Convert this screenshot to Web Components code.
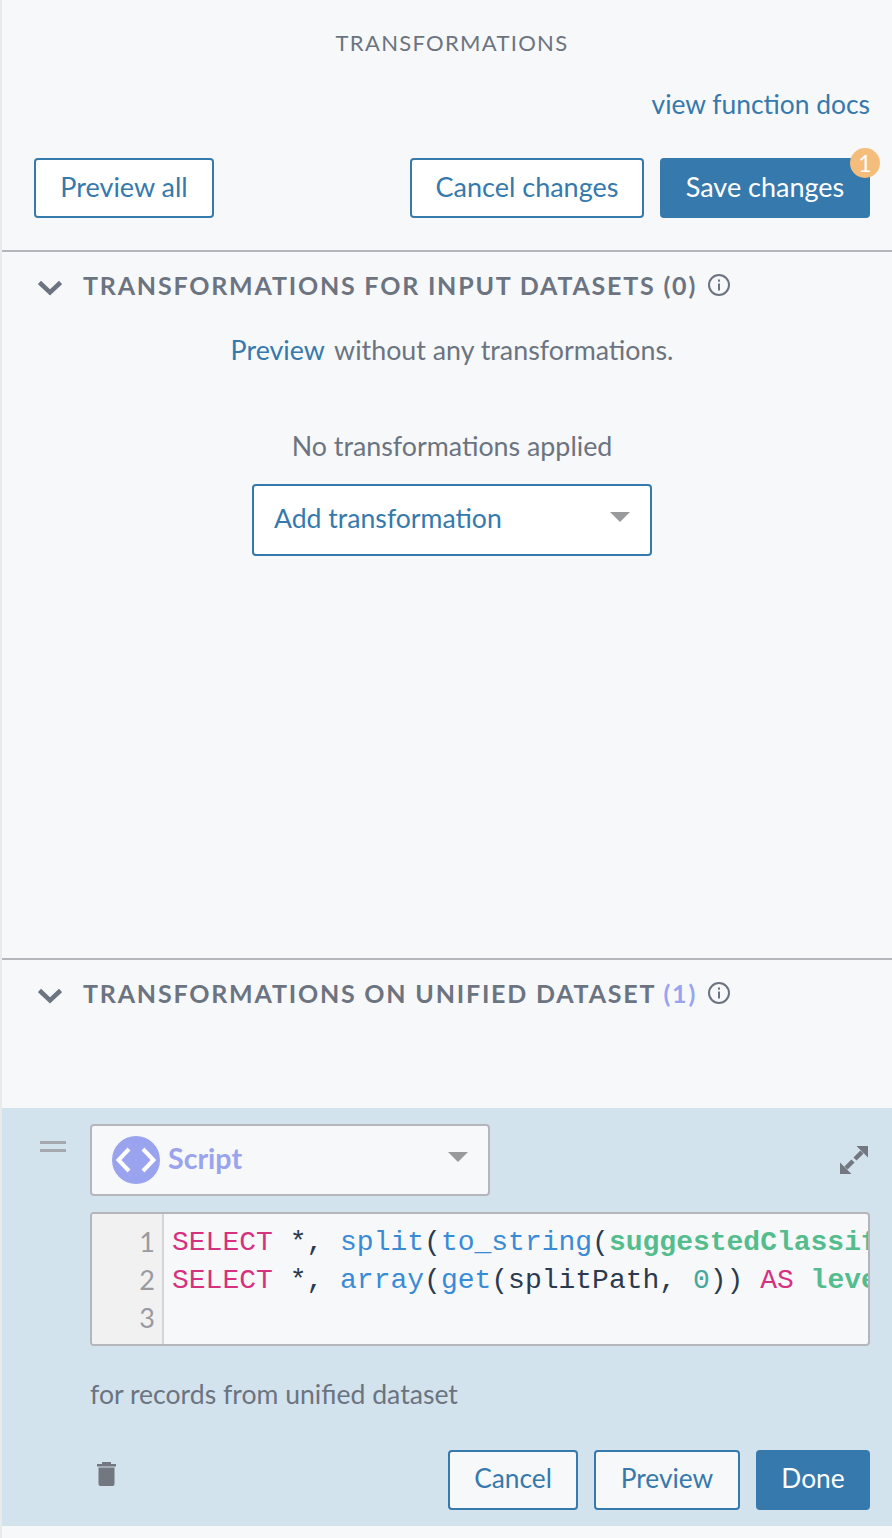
<!DOCTYPE html>
<html>
<head>
<meta charset="utf-8">
<title>Transformations</title>
<style>
    html, body { margin: 0; padding: 0; }
    body { font-family: "Lato", "Liberation Sans", sans-serif; color: #6b7480; background: #f7f8fa; }
</style>
</head>
<body>
<x-transforms-panel></x-transforms-panel>

<script>
class XButton extends HTMLElement {
    constructor() {
        super();
        this.attachShadow({ mode: 'open' });
        this.shadowRoot.innerHTML = `
            <style>
                :host {
                    display: inline-flex;
                    position: relative;
                    box-sizing: border-box;
                    height: 60px;
                    padding-bottom: 4px;
                    align-items: center;
                    justify-content: center;
                    border: 2px solid #3679ad;
                    border-radius: 4px;
                    background: var(--btn-bg, #fff);
                    color: #3679ad;
                    font-size: var(--btn-size, 27px);
                    white-space: nowrap;
                }
                :host([primary]) {
                    background: #3679ad;
                    color: #fff;
                }
            </style>
            <slot></slot>
        `;
    }
}
customElements.define('x-button', XButton);

class XBadge extends HTMLElement {
    constructor() {
        super();
        this.attachShadow({ mode: 'open' });
        this.shadowRoot.innerHTML = `
            <style>
                :host {
                    position: absolute;
                    top: -12px;
                    right: -12px;
                    width: 30px;
                    height: 30px;
                    border-radius: 50%;
                    background: #f5bd7c;
                    color: #fff;
                    font-size: 23px;
                    display: flex;
                    align-items: center;
                    justify-content: center;
                }
            </style>
            <slot></slot>
        `;
    }
}
customElements.define('x-badge', XBadge);

class XSelect extends HTMLElement {
    constructor() {
        super();
        this.attachShadow({ mode: 'open' });
        this.shadowRoot.innerHTML = `
            <style>
                :host {
                    display: flex;
                    box-sizing: border-box;
                    width: 400px;
                    height: 72px;
                    padding: 0 20px 4px;
                    align-items: center;
                    justify-content: space-between;
                    border: 2px solid #3679ad;
                    border-radius: 4px;
                    background: #fff;
                    color: #3679ad;
                    font-size: 26.6px;
                }
                :host([muted]) {
                    border-color: #b4b6bc;
                    background: #f7f8fa;
                    padding-bottom: 0;
                }
                .caret {
                    flex: none;
                    width: 0;
                    height: 0;
                    margin-bottom: 2px;
                    border-left: 10px solid transparent;
                    border-right: 10px solid transparent;
                    border-top: 10px solid #999a9c;
                }
                :host([muted]) .caret { margin-bottom: 6px; }
            </style>
            <slot></slot>
            <div class="caret"></div>
        `;
    }
}
customElements.define('x-select', XSelect);

class XSection extends HTMLElement {
    constructor() {
        super();
        this.attachShadow({ mode: 'open' });
        this.shadowRoot.innerHTML = `
            <style>
                :host {
                    display: block;
                    box-sizing: border-box;
                    border-top: 2px solid #b4b6bc;
                }
                .head {
                    display: flex;
                    align-items: center;
                    box-sizing: border-box;
                    height: 68px;
                    padding: 0 0 2px 36px;
                    color: #6b7480;
                    font-size: 25px;
                    font-weight: 700;
                    letter-spacing: 1.8px;
                    white-space: nowrap;
                }
                .chev { width: 24px; height: 16px; margin: 6px 21px 0 0; flex: none; }
                .info { width: 24px; height: 24px; margin-left: 10px; flex: none; }
            </style>
            <div class="head">
                <svg class="chev" viewBox="0 0 24 16"><path d="M1.5 2.5L12 12.5 22.5 2.5" fill="none" stroke="#6b7480" stroke-width="4.5"/></svg>
                <span><slot name="title"></slot></span>
                <svg class="info" viewBox="0 0 24 24">
                    <circle cx="12" cy="12" r="10" fill="none" stroke="#6b7480" stroke-width="2"/>
                    <rect x="11" y="10.5" width="2" height="7" fill="#6b7480"/>
                    <rect x="11" y="6.5" width="2" height="2.2" fill="#6b7480"/>
                </svg>
            </div>
            <slot></slot>
        `;
    }
}
customElements.define('x-section', XSection);

class XCodeEditor extends HTMLElement {
    constructor() {
        super();
        this.attachShadow({ mode: 'open' });
        this.shadowRoot.innerHTML = `
            <style>
                :host {
                    display: flex;
                    box-sizing: border-box;
                    height: 134px;
                    border: 2px solid #b4b6bc;
                    border-radius: 4px;
                    background: #f7f8fa;
                    overflow: hidden;
                    font-family: "Liberation Mono", monospace;
                    font-size: 28px;
                    line-height: 38px;
                }
                .gutter {
                    flex: none;
                    box-sizing: border-box;
                    width: 72px;
                    padding: 9px 7px 0 0;
                    background: #f1f1f2;
                    border-right: 2px solid #d4d5d8;
                    color: #999a9f;
                    font-family: "Lato", sans-serif;
                    font-size: 27px;
                    text-align: right;
                }
                .code {
                    flex: 1;
                    min-width: 0;
                    padding: 10px 0 0 8px;
                    color: #2b3a4e;
                    white-space: pre;
                    overflow: hidden;
                }
            </style>
            <div class="gutter">1<br>2<br>3</div>
            <div class="code"><slot></slot></div>
        `;
    }
}
customElements.define('x-code-editor', XCodeEditor);

class XTransformCard extends HTMLElement {
    constructor() {
        super();
        this.attachShadow({ mode: 'open' });
        this.shadowRoot.innerHTML = `
            <style>
                :host {
                    display: flex;
                    --btn-bg: #f7f8fa;
                    --btn-size: 26.3px;
                    background: #d3e3ee;
                    padding: 16px 22px 16px 36px;
                }
                .handle { flex: none; width: 52px; padding-top: 17px; box-sizing: border-box; }
                .handle svg { display: block; }
                .main { flex: 1; min-width: 0; }
                .row { display: flex; justify-content: space-between; align-items: center; }
                .expand { width: 28px; height: 28px; margin-right: 2px; }
                .script { display: flex; align-items: center; gap: 8px; margin-bottom: 4px; font-size: 28.6px; font-weight: 700; color: #9aa3ee; }
                .script svg { width: 48px; height: 48px; flex: none; margin-top: 4px; }
                x-code-editor { margin-top: 16px; }
                .caption {
                    margin-top: 33px;
                    height: 30px;
                    line-height: 30px;
                    font-size: 26.6px;
                    color: #6b7480;
                }
                .actions { display: flex; justify-content: space-between; margin-top: 41px; }
                .trash { width: 19px; height: 24px; margin: 12px 0 0 7px; }
                .btns { display: flex; gap: 16px; }
            </style>
            <div class="handle">
                <svg width="28" height="12" viewBox="0 0 28 12"><rect x="2" width="26" height="3" fill="#a5a8ad"/><rect x="2" y="8" width="26" height="3" fill="#a5a8ad"/></svg>
            </div>
            <div class="main">
                <div class="row">
                    <x-select muted>
                        <span class="script">
                            <svg viewBox="0 0 48 48">
                                <circle cx="24" cy="24" r="24" fill="#9aa3ee"/>
                                <path d="M17 13L6.5 24 17 35M31 13l10.500 11L31 35" fill="none" stroke="#fff" stroke-width="4"/>
                            </svg>
                            Script
                        </span>
                    </x-select>
                    <svg class="expand" viewBox="0 0 28 28">
                        <path d="M16.500 0H28v11.500zM0 16.500V28h11.500z" fill="#73777f"/>
                        <path d="M22 6l-7 7M6 22l7-7" stroke="#73777f" stroke-width="4.5" fill="none"/>
                    </svg>
                </div>
                <x-code-editor><slot></slot></x-code-editor>
                <div class="caption">for records from unified dataset</div>
                <div class="actions">
                    <svg class="trash" viewBox="0 0 19 24">
                        <path d="M5 0h9v2h5v2.500H0V2h5zM1.500 5.500h16V22a2 2 0 0 1-2 2h-12a2 2 0 0 1-2-2z" fill="#73777f"/>
                    </svg>
                    <div class="btns">
                        <x-button style="width:130px">Cancel</x-button>
                        <x-button style="width:146px">Preview</x-button>
                        <x-button primary style="width:114px">Done</x-button>
                    </div>
                </div>
            </div>
        `;
    }
}
customElements.define('x-transform-card', XTransformCard);

class XTransformsPanel extends HTMLElement {
    constructor() {
        super();
        this.attachShadow({ mode: 'open' });
        this.shadowRoot.innerHTML = `
            <style>
                :host {
                    display: block;
                    box-sizing: border-box;
                    height: 1538px;
                    overflow: hidden;
                    background: #f7f8fa;
                    border-left: 2px solid #e9eaec;
                    color: #6b7480;
                    font-size: 26.8px;
                }
                a { color: #3679ad; text-decoration: none; }
                header { padding: 28px 22px 32px 32px; }
                .title {
                    height: 30px;
                    line-height: 30px;
                    text-align: center;
                    font-size: 22px;
                    letter-spacing: 1.3px;
                }
                .docs { height: 30px; line-height: 28px; margin-top: 32px; text-align: right; font-size: 26.4px; }
                .toolbar { display: flex; justify-content: space-between; margin-top: 38px; }
                .right { display: flex; gap: 16px; }
                #input { height: 708px; }
                #unified { height: 150px; }
                .body { padding-left: 10px; }
                .center { text-align: center; line-height: 30px; }
                .hint { margin-top: 15px; }
                .hint a { margin-right: 3px; }
                .empty { margin-top: 66px; }
                x-select { margin: 23px auto 0; }
                .count { color: #9aa3ee; }
                .kw { color: #d6317e; }
                .fn { color: #3a8bd6; }
                .col { color: #55bd8d; font-weight: 700; }
                .num { color: #46a79a; }
            </style>
            <header>
                <div class="title">TRANSFORMATIONS</div>
                <div class="docs"><a href="#">view function docs</a></div>
                <div class="toolbar">
                    <x-button style="width:180px">Preview all</x-button>
                    <div class="right">
                        <x-button style="width:234px">Cancel changes</x-button>
                        <x-button primary style="width:210px">Save changes<x-badge>1</x-badge></x-button>
                    </div>
                </div>
            </header>
            <x-section id="input">
                <span slot="title">TRANSFORMATIONS FOR INPUT DATASETS (0)</span>
                <div class="body">
                    <div class="center hint"><a href="#">Preview</a> without any transformations.</div>
                    <div class="center empty">No transformations applied</div>
                    <x-select>Add transformation</x-select>
                </div>
            </x-section>
            <x-section id="unified">
                <span slot="title">TRANSFORMATIONS ON UNIFIED DATASET <span class="count">(1)</span></span>
            </x-section>
            <x-transform-card><span class="kw">SELECT</span> *, <span class="fn">split</span>(<span class="fn">to_string</span>(<span class="col">suggestedClassif</span><br><span class="kw">SELECT</span> *, <span class="fn">array</span>(<span class="fn">get</span>(splitPath, <span class="num">0</span>)) <span class="kw">AS</span> <span class="col">leve</span></x-transform-card>
        `;
    }
}
customElements.define('x-transforms-panel', XTransformsPanel);
</script>
</body>
</html>
